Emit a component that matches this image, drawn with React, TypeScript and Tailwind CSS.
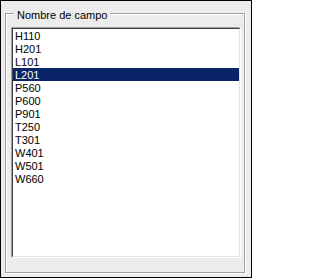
const campos = ["H110", "H201", "L101", "L201", "P560", "P600", "P901", "T250", "T301", "W401", "W501", "W660"];

export default function App() {
  const seleccionado = "L201";

  return (
    <div
      className="h-[278px] w-[252px] border border-black bg-[#ececec] pl-[4px] pt-[12px] text-[11px] leading-[13px] text-black"
      style={{ fontFamily: '"Liberation Sans", Arial, sans-serif' }}
    >
      <div className="relative h-[260px] w-[240px] border border-[#a0a0a0] pl-[5px] pt-[13px] shadow-[inset_1px_1px_0_#ffffff,1px_1px_0_#ffffff]">
        <span className="absolute left-[8px] top-[-5px] bg-[#ececec] pl-[3px] pr-[2px]">Nombre de campo</span>

        <div className="h-[231px] w-[230px] border-l border-t border-b border-r border-l-[#a0a0a0] border-t-[#a0a0a0] border-r-white border-b-white">
          <div className="h-full w-full border-l border-t border-b border-r border-l-[#404040] border-t-[#404040] border-r-[#e3e3e3] border-b-[#e3e3e3] bg-white">
            <ul>
              {campos.map((c) => (
                <li
                  key={c}
                  className={c === seleccionado ? "h-[13px] bg-[#0a246a] pl-[2px] leading-[15px] text-white" : "h-[13px] pl-[2px] leading-[15px]"}
                >
                  {c}
                </li>
              ))}
            </ul>
          </div>
        </div>
      </div>
    </div>
  );
}
